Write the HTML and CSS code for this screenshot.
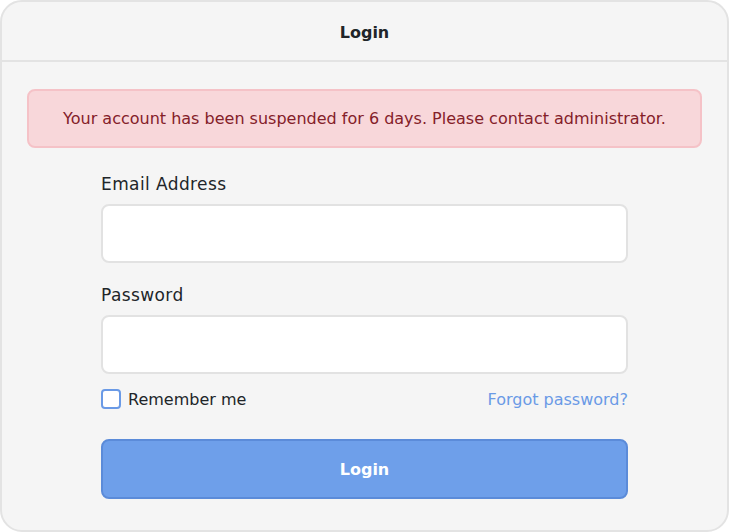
FILE: index.html
```html
<!DOCTYPE html>
<html lang="en">
<head>
    <meta charset="UTF-8">
    <meta name="viewport" content="width=device-width, initial-scale=1.0">
    <title>Login</title>
    <link rel="stylesheet" href="styles.css">
</head>
<body>
    <div class="card">
        <div class="card-header">
            <h3 class="card-title">Login</h3>
        </div>
        <div class="card-body">
            <div class="alert">Your account has been suspended for 6 days. Please contact administrator.</div>
            <form class="login-form" onsubmit="event.preventDefault()">
                <div class="form-group">
                    <label class="form-label" for="email">Email Address</label>
                    <input type="email" class="form-control" id="email">
                </div>
                <div class="form-group">
                    <label class="form-label" for="password">Password</label>
                    <input type="password" class="form-control" id="password">
                </div>
                <div class="form-row">
                    <label class="check">
                        <input type="checkbox" class="check-input">
                        <span>Remember me</span>
                    </label>
                    <a href="#" class="forgot-link">Forgot password?</a>
                </div>
                <button type="submit" class="submit-button">Login</button>
            </form>
        </div>
    </div>
</body>
</html>
```

FILE: styles.css
```css
:root {
    --card-background: #f5f5f5;
    --card-border: #e3e3e3;
    --text-color: #212529;
    --alert-background: #f8d7da;
    --alert-border: #f5c2c7;
    --alert-text: #842029;
    --primary-blue: #6e9fea;
    --primary-border: #5b8bd9;
    --link-blue: #6a9ae6;
}

* {
    box-sizing: border-box;
}

html, body {
    height: 100%;
}

body {
    font-family: 'DejaVu Sans', sans-serif;
    color: var(--text-color);
    background-color: #fff;
    margin: 0;
}

.card {
    height: 100%;
    background-color: var(--card-background);
    border: 2px solid var(--card-border);
    border-radius: 22px;
    overflow: hidden;
}

.card-header {
    height: 60px;
    padding-top: 3px;
    display: flex;
    align-items: center;
    justify-content: center;
    border-bottom: 2px solid var(--card-border);
}

.card-title {
    margin: 0;
    font-size: 16px;
    font-weight: 600;
}

.card-body {
    padding: 27px 25px;
}

.alert {
    height: 59px;
    display: flex;
    align-items: center;
    justify-content: center;
    background-color: var(--alert-background);
    border: 2px solid var(--alert-border);
    border-radius: 8px;
    color: var(--alert-text);
    font-size: 16px;
}

.login-form {
    width: 527px;
    margin: 24px auto 0;
}

.form-group {
    margin-bottom: 20px;
}

.form-label {
    display: block;
    font-size: 17px;
    letter-spacing: 0.4px;
    line-height: 24px;
    margin-bottom: 8px;
}

.form-control {
    display: block;
    width: 100%;
    height: 59px;
    background-color: #fff;
    border: 2px solid #e2e2e2;
    border-radius: 8px;
    font: inherit;
    padding: 0 14px;
}

.form-row {
    display: flex;
    justify-content: space-between;
    align-items: center;
    margin-top: -5px;
    margin-bottom: 30px;
    font-size: 16px;
}

.check {
    display: flex;
    align-items: center;
    gap: 7px;
}

.check-input {
    appearance: none;
    margin: 0;
    width: 20px;
    height: 20px;
    background-color: #fff;
    border: 2px solid var(--link-blue);
    border-radius: 4px;
}

.forgot-link {
    color: var(--link-blue);
    text-decoration: none;
}

.submit-button {
    display: block;
    width: 100%;
    height: 60px;
    background-color: var(--primary-blue);
    color: #fff;
    border: 2px solid var(--primary-border);
    border-radius: 8px;
    font: inherit;
    font-size: 16px;
    font-weight: 700;
    cursor: pointer;
}
```
